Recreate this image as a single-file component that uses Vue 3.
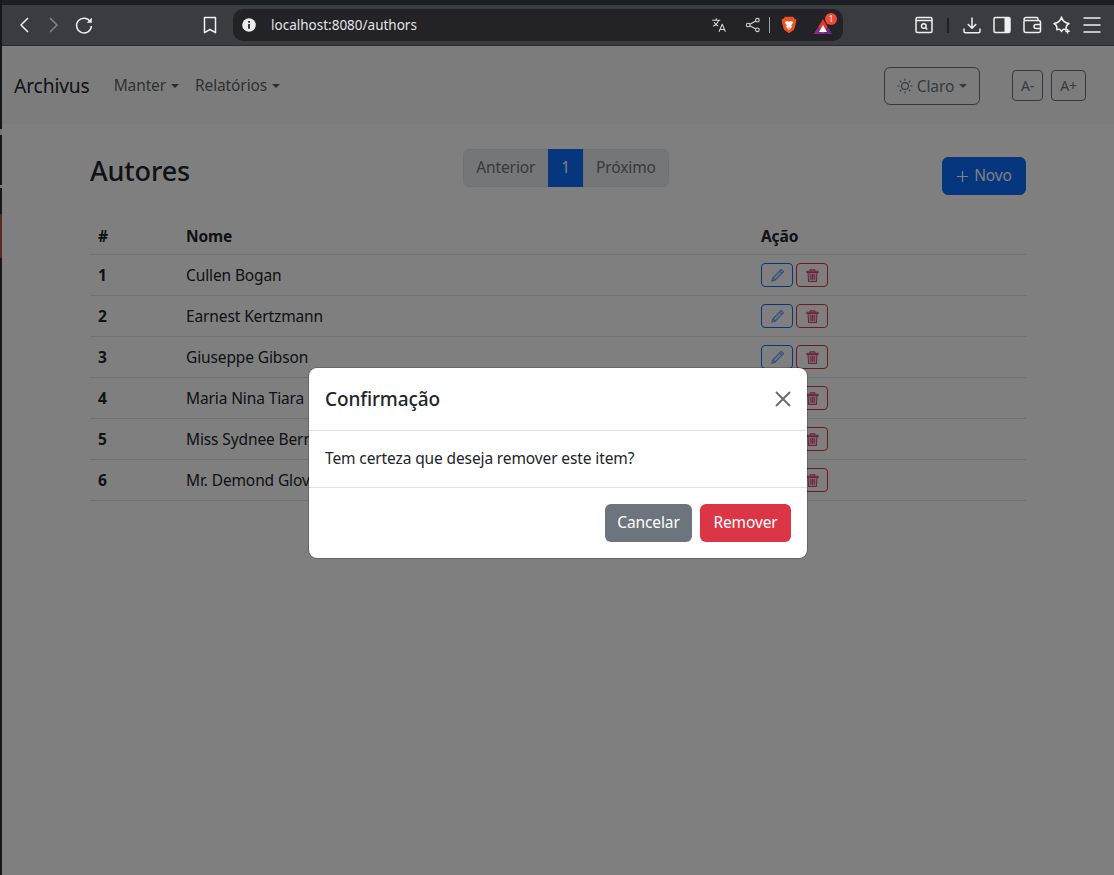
<template>
  <div class="window">
    <div class="edge">
      <span class="edge-mark"></span>
      <span class="edge-mark second"></span>
      <span class="edge-red"></span>
    </div>
    <div class="main">
      <div class="top-strip"></div>
      <header class="toolbar">
        <div class="nav-icons">
          <svg class="ic" viewBox="0 0 20 20"><path d="M14 3 7 10l7 7" /></svg>
          <svg class="ic dim" viewBox="0 0 20 20"><path d="m6 3 7 7-7 7" /></svg>
          <svg class="ic" viewBox="0 0 20 20"><path d="M16.500 7A7.400 7.400 0 1 0 17.400 11" /><path d="M12.800 7.800h5V2.800z" class="solid" /></svg>
        </div>
        <svg class="ic bookmark" viewBox="0 0 20 20"><path d="M4.500 2.500h11v15.200L10 14.500l-5.500 3.200z" /></svg>
        <div class="urlbar">
          <svg class="info" viewBox="0 0 14 14"><circle cx="7" cy="7" r="6.800" fill="#ececee" /><path d="M6.100 6h1.800v4.800H6.100zM6.100 3h1.800v1.800H6.100z" fill="#26262c" /></svg>
          <span class="url">localhost:8080/authors</span>
          <div class="url-right">
            <svg class="ic small" viewBox="0 0 20 20"><path d="M1.500 4h10M6.500 1.500V4M9.500 4c-.8 3.200-3.500 6-7 7.600M3.800 6.500c1.200 2.200 3 3.800 5.200 4.800M10 18.500l4-9.500 4 9.500M11.300 15.500h5.400" /></svg>
            <svg class="ic small share" viewBox="0 0 20 20"><circle cx="15.500" cy="4" r="2.300" /><circle cx="4" cy="10" r="2.300" /><circle cx="15.500" cy="16" r="2.300" /><path d="m6 9 7.500-4M6 11l7.500 4" /></svg>
            <span class="url-sep"></span>
            <svg class="brave" viewBox="0 0 20 22"><path d="M5 .8h10l2 2.400 2.200.6-.9 6.400-2.100 6.800L10 21.400l-6.200-4.400-2.100-6.800-.9-6.400L3 3.200z" fill="#f1511f" /><path d="M4.500 7.200 8 6l2 .8 2-.8 3.500 1.200-2.800 4.300 1 2.100-3.700 3.700-3.700-3.700 1-2.100z" fill="#fff" /><path d="M8.500 14.500h3L10 16z" fill="#f1511f" /></svg>
            <div class="rewards">
              <svg viewBox="0 0 18 15" width="18" height="15"><path d="M9 0 18 15H0z" fill="#e5352c" /><path d="M0 15 4.500 7.500 9 15z" fill="#7b2c8f" /><path d="M18 15 13.500 7.500 9 15z" fill="#5f2a90" /><path d="M9 6 13 13H5z" fill="#fff" /></svg>
              <span class="rewards-badge">1</span>
            </div>
          </div>
        </div>
        <div class="tools">
          <svg class="ic" viewBox="0 0 20 20"><rect x="2" y="2.500" width="16" height="15" rx="1.500" /><path d="M2 5.500h16" /><circle cx="9.800" cy="11" r="2.300" /><path d="m11.500 12.700 1.800 1.800" /></svg>
          <span class="tool-sep"></span>
          <svg class="ic" viewBox="0 0 20 20"><path d="M10 2.500V13M5.800 9l4.200 4.200L14.200 9M2 13.500v2.800a1.500 1.500 0 0 0 1.500 1.500h13a1.500 1.500 0 0 0 1.500-1.500v-2.800" /></svg>
          <svg class="ic" viewBox="0 0 20 20"><rect x="2" y="2.500" width="16" height="15" rx="1.500" /><rect x="12.500" y="2.500" width="5.500" height="15" class="solid" /></svg>
          <svg class="ic" viewBox="0 0 20 20"><path d="M2 5.500v10a2 2 0 0 0 2 2h12.500a2 2 0 0 0 2-2v-8a2 2 0 0 0-2-2H4A2 2 0 0 1 2 4.500a2 2 0 0 1 2-2h10.500a1.500 1.500 0 0 1 1.500 1.500v1.500M18.500 9.500h-4.500a2 2 0 0 0 0 4h4.500" /></svg>
          <svg class="ic" viewBox="0 0 20 20"><path d="M9.500 2C10.300 5.800 12.500 7.700 17 8.500 14.200 10 13.700 12 14.200 14.800 12.300 13.700 10.800 14 9.500 16.500 8.200 14 6.700 13.700 4.800 14.800 5.300 12 4.800 10 2 8.500 6.500 7.700 8.700 5.800 9.500 2z" /><path d="M15.500 14v4.500M13.300 16.200h4.500" /></svg>
          <svg class="ic" viewBox="0 0 20 20"><path d="M1.500 3h17M1.500 10h17M1.500 17h17" /></svg>
        </div>
      </header>

      <div class="page">
        <nav class="navbar">
          <span class="brand">Archivus</span>
          <a class="nav-link caret">Manter</a>
          <a class="nav-link caret">Relatórios</a>
          <button class="theme-btn caret">
            <svg class="sun" viewBox="0 0 16 16"><circle cx="8" cy="8" r="3.400" /><path d="M8 .5v2.200M8 13.300v2.200M.5 8h2.200M13.300 8h2.200M2.700 2.700l1.600 1.600M11.700 11.700l1.600 1.600M2.700 13.300l1.600-1.600M11.700 4.300l1.600-1.600" /></svg>
            Claro
          </button>
          <button class="font-btn first">A-</button>
          <button class="font-btn">A+</button>
        </nav>

        <main class="content">
          <div class="title-row">
            <h2>Autores</h2>
            <div class="pagination">
              <span class="page-item">Anterior</span>
              <span class="page-item active">1</span>
              <span class="page-item">Próximo</span>
            </div>
            <button class="new-btn">
              <svg viewBox="0 0 14 14"><path d="M7 1v12M1 7h12" /></svg>
              Novo
            </button>
          </div>

          <table>
            <thead>
              <tr>
                <th class="col-id">#</th>
                <th class="col-name">Nome</th>
                <th>Ação</th>
              </tr>
            </thead>
            <tbody>
              <tr v-for="author in authors" :key="author.id">
                <th>{{ author.id }}</th>
                <td>{{ author.name }}</td>
                <td>
                  <div class="actions">
                    <button class="act edit">
                      <svg viewBox="0 0 16 16"><path d="M12 1.500 14.500 4 5.500 13 1.800 14.200 3 10.500zM10.200 3.300l2.500 2.500M3 10.500 5.500 13" /></svg>
                    </button>
                    <button class="act del">
                      <svg viewBox="0 0 16 16"><path d="M2 3.500h12v1.200H2zM5.500 3.500V1.800h5v1.700M3.200 4.700l.6 9.800h8.400l.6-9.800zM6.200 6.500v6M8 6.500v6M9.800 6.500v6" /></svg>
                    </button>
                  </div>
                </td>
              </tr>
            </tbody>
          </table>
        </main>

        <div class="backdrop">
          <div class="modal">
            <div class="modal-header">
              <h5>Confirmação</h5>
              <svg class="close" viewBox="0 0 16 16"><path d="M1 1l14 14M15 1 1 15" /></svg>
            </div>
            <div class="modal-body">Tem certeza que deseja remover este item?</div>
            <div class="modal-footer">
              <button class="btn cancel">Cancelar</button>
              <button class="btn remove">Remover</button>
            </div>
          </div>
        </div>
      </div>
    </div>
  </div>
</template>

<script setup>
const authors = [
  { id: 1, name: 'Cullen Bogan' },
  { id: 2, name: 'Earnest Kertzmann' },
  { id: 3, name: 'Giuseppe Gibson' },
  { id: 4, name: 'Maria Nina Tiara' },
  { id: 5, name: 'Miss Sydnee Bernier' },
  { id: 6, name: 'Mr. Demond Glover' }
]
</script>

<style>
html, body {
  margin: 0;
  height: 100%;
  overflow: hidden;
}
</style>

<style scoped>
.window {
  display: flex;
  height: 875px;
  font-family: "Noto Sans", "Open Sans", sans-serif;
  font-size: 15.500px;
  letter-spacing: -0.12px;
  color: #212529;
}

button {
  letter-spacing: inherit;
}

.edge {
  width: 2px;
  background: #17171a;
  position: relative;
  flex-shrink: 0;
}

.edge-mark {
  position: absolute;
  left: 0;
  top: 129px;
  width: 2px;
  height: 6px;
  background: #777;
}

.edge-mark.second {
  top: 185px;
  height: 3px;
}

.edge-red {
  position: absolute;
  left: 0;
  top: 214px;
  width: 2px;
  height: 44px;
  background: #5a2a20;
}

.main {
  flex: 1;
  min-width: 0;
  display: flex;
  flex-direction: column;
}

.top-strip {
  height: 5px;
  background: #1d1d24;
}

.toolbar {
  height: 41px;
  box-sizing: border-box;
  background: #3b3b42;
  border-bottom: 1px solid #2a2a2e;
  display: flex;
  align-items: center;
  padding: 0 12px;
  color: #f2f2f4;
}

.ic {
  width: 20px;
  height: 20px;
  fill: none;
  stroke: #f0f0f2;
  stroke-width: 1.500;
  stroke-linejoin: round;
  flex-shrink: 0;
}

.ic .solid {
  fill: #f0f0f2;
  stroke: none;
}

.ic.dim {
  stroke: #85858b;
}

.ic.small {
  width: 16px;
  height: 16px;
  stroke: #d9d9dc;
  stroke-width: 1.300;
}

.nav-icons {
  display: flex;
  gap: 10px;
  align-items: center;
}

.bookmark {
  margin-left: 106px;
}

.urlbar {
  margin-left: 13px;
  width: 610px;
  height: 32px;
  background: #222227;
  border-radius: 10px;
  display: flex;
  align-items: center;
  box-sizing: border-box;
  padding: 0 9px;
  flex-shrink: 0;
}

.info {
  width: 14px;
  height: 14px;
}

.url {
  margin-left: 15px;
  font-size: 13.500px;
  letter-spacing: 0;
  color: #e2e2e4;
}

.url-right {
  margin-left: auto;
  display: flex;
  align-items: center;
}

.share {
  margin-left: 18px;
}

.url-sep {
  width: 1px;
  height: 16px;
  background: #a0a0a4;
  margin: 0 11px 0 8px;
}

.brave {
  width: 16px;
  height: 18px;
}

.rewards {
  position: relative;
  margin-left: 17px;
  margin-right: 2px;
  height: 15px;
  margin-top: 2px;
}

.rewards svg {
  display: block;
}

.rewards-badge {
  position: absolute;
  top: -6px;
  right: -5px;
  width: 12px;
  height: 12px;
  border-radius: 50%;
  background: #ef4a36;
  color: #fff;
  font-size: 8px;
  line-height: 12px;
  text-align: center;
}

.tools {
  margin-left: 71px;
  display: flex;
  align-items: center;
  gap: 10px;
}

.tool-sep {
  width: 2px;
  height: 15px;
  background: #1f1f24;
  margin: 0 3px 0 3px;
}

.page {
  position: relative;
  flex: 1;
  background: #fff;
}

.navbar {
  height: 78px;
  box-sizing: border-box;
  background: #f8f9fa;
  display: flex;
  align-items: center;
  padding: 0 28px 0 12px;
}

.brand {
  font-size: 19.200px;
  margin-right: 16px;
}

.nav-link {
  color: rgba(0, 0, 0, 0.65);
  padding: 0 8px;
}

.caret::after {
  content: "";
  display: inline-block;
  margin-left: 5px;
  vertical-align: 3px;
  border-top: 4.800px solid;
  border-left: 4.800px solid transparent;
  border-right: 4.800px solid transparent;
}

.theme-btn {
  margin-left: auto;
  margin-top: 1px;
  width: 96px;
  height: 38px;
  background: none;
  border: 1px solid #6c757d;
  border-radius: 6px;
  font: inherit;
  color: #6c757d;
  display: flex;
  align-items: center;
  justify-content: center;
  gap: 4px;
  padding: 0;
}

.theme-btn.caret::after {
  margin-left: 1px;
  vertical-align: 0;
}

.sun {
  width: 16px;
  height: 16px;
  fill: none;
  stroke: currentColor;
  stroke-width: 1.100;
}

.font-btn {
  width: 31px;
  height: 31px;
  margin-top: 1px;
  background: none;
  border: 1px solid #6c757d;
  border-radius: 4px;
  font: inherit;
  font-size: 14px;
  color: #6c757d;
  padding: 0;
  margin-left: 8px;
}

.font-btn + .font-btn {
  width: 35px;
}

.font-btn.first {
  margin-left: 32px;
}

.content {
  padding: 25px 88px 0;
}

.title-row {
  display: flex;
  justify-content: space-between;
  align-items: center;
  margin-bottom: 11px;
}

h2 {
  font-size: 27px;
  font-weight: 500;
  line-height: 1.200;
  margin: 0 0 10px;
}

.pagination {
  display: flex;
  margin-bottom: 16px;
  height: 38px;
  padding-left: 1px;
}

.page-item {
  padding: 0 12.500px 2px;
  line-height: 34px;
  background: #e9ecef;
  border: 1px solid #dee2e6;
  color: #6c757d;
  margin-left: -1px;
}

.page-item:first-child {
  border-radius: 6px 0 0 6px;
}

.page-item:last-child {
  border-radius: 0 6px 6px 0;
}

.page-item.active {
  background: #0d6efd;
  border-color: #0d6efd;
  color: #fff;
}

.new-btn {
  width: 84px;
  height: 38px;
  background: #0d6efd;
  border: 1px solid #0d6efd;
  border-radius: 6px;
  color: #fff;
  font: inherit;
  padding: 0 0 2px;
  display: flex;
  align-items: center;
  justify-content: center;
  gap: 5px;
}

.new-btn svg {
  width: 13px;
  height: 13px;
  fill: none;
  stroke: currentColor;
  stroke-width: 1.300;
  margin-top: 2px;
}

table {
  width: 100%;
  border-collapse: collapse;
}

tr {
  border-bottom: 1px solid #dee2e6;
}

th, td {
  padding: 8px;
  text-align: left;
  line-height: 24px;
  height: 24px;
}

th {
  font-weight: 700;
}

thead th {
  padding: 10px 8px 6px;
}

.col-id {
  width: 72px;
}

.col-name {
  width: 559px;
}

.actions {
  display: flex;
  gap: 3px;
}

.act {
  width: 32px;
  height: 24px;
  background: none;
  border-radius: 4px;
  padding: 0;
  display: flex;
  align-items: center;
  justify-content: center;
  border: 1px solid;
}

.act svg {
  width: 15px;
  height: 15px;
  stroke-width: 1.100;
  stroke-linejoin: round;
}

.act.edit {
  color: #0d6efd;
}

.act.edit svg {
  fill: rgba(92, 154, 255, 0.25);
  stroke: #5c9aff;
}

.act.del {
  color: #dc3545;
}

.act.del svg {
  fill: rgba(224, 64, 122, 0.28);
  stroke: #d9487a;
}

.backdrop {
  position: absolute;
  inset: 0;
  background: rgba(0, 0, 0, 0.5);
  display: flex;
  justify-content: center;
  align-items: flex-start;
  padding-top: 322px;
}

.modal {
  width: 498px;
  height: 190px;
  background: #fff;
  border-radius: 8px;
  display: flex;
  flex-direction: column;
  box-shadow: 0 0 0 1px rgba(0, 0, 0, 0.2);
}

.modal-header {
  height: 63px;
  box-sizing: border-box;
  border-bottom: 1px solid #dee2e6;
  display: flex;
  align-items: center;
  justify-content: space-between;
  padding: 0 16px;
}

h5 {
  margin: 0;
  font-size: 19px;
  font-weight: 500;
}

.close {
  width: 16px;
  height: 16px;
  fill: none;
  stroke: #6d6d6d;
  stroke-width: 2;
}

.modal-body {
  height: 57px;
  box-sizing: border-box;
  border-bottom: 1px solid #dee2e6;
  padding: 0 16px 2px;
  display: flex;
  align-items: center;
}

.modal-footer {
  flex: 1;
  display: flex;
  justify-content: flex-end;
  align-items: flex-start;
  gap: 8px;
  padding: 16px 16px 0;
}

.btn {
  height: 38px;
  border: none;
  border-radius: 6px;
  color: #fff;
  font: inherit;
  padding: 0 0 2px;
}

.cancel {
  width: 87px;
  background: #6c757d;
}

.remove {
  width: 91px;
  background: #dc3545;
}
</style>
